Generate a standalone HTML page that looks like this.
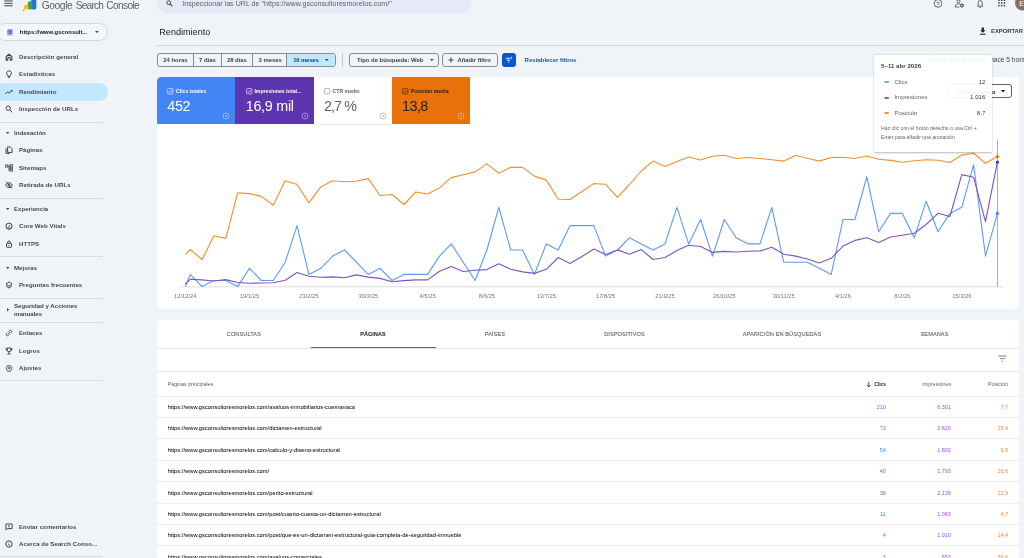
<!DOCTYPE html>
<html lang="es">
<head>
<meta charset="utf-8">
<title>Rendimiento - Google Search Console</title>
<style>
*{box-sizing:border-box;margin:0;padding:0}
html,body{width:1024px;height:558px;overflow:hidden;background:#f0f4f9;font-family:"Liberation Sans",sans-serif;color:#3c4043}
.abs{position:absolute}
#app{position:relative;width:1024px;height:558px;overflow:hidden;will-change:transform}
.t{position:absolute;white-space:nowrap;line-height:1}
/* top bar */
#brand{left:41.7px;top:1.2px;font-size:10.3px;color:#5f6368}
#search{left:157px;top:-8px;width:314px;height:22px;border-radius:11px;background:#e4ebf7}
#search .t{left:25.2px;top:9px;font-size:7.13px;color:#5f6368}
/* sidebar */
#prop{left:-4px;top:23.1px;width:111.6px;height:17.7px;border:1px solid #d5d9de;border-radius:9px;background:#f3f6fb}
#prop .t{left:22.8px;top:5.8px;font-size:5.9px;font-weight:bold;color:#202124}
.nav{position:absolute;left:0;width:107px;height:17px}
.nav .t{left:19px;top:5.5px;font-size:6.1px;color:#44474b;font-weight:bold;letter-spacing:.05px}
.nav.sel{background:#c2e7ff;border-radius:8.75px;left:-5px;width:112.7px;height:17.5px}
.nav.sel svg{left:10px}.nav.sel .t{left:24px}
.nav svg{position:absolute;left:5px;top:4.5px;width:8px;height:8px}
.grp{position:absolute;left:0;width:107px;height:17px}
.grp .t{left:14px;top:5.5px;font-size:6.1px;color:#44474b;font-weight:bold}
.grp i{position:absolute;left:6px;top:7.3px;border:1.75px solid transparent;border-top:2.2px solid #444;border-bottom:0}
.sdiv{position:absolute;left:0;width:103px;height:1px;background:#dadce0}
/* main */
#title{left:159.3px;top:28px;font-size:9.08px;color:#202124}
#hdiv{left:157px;top:45px;width:867px;height:1px;background:#d3d7dc}
.chip{position:absolute;top:52px;height:14px;border:1px solid #8a8d91;border-radius:3px;font-size:5.9px;font-weight:bold;color:#3c4043}
.chip .t{top:4.5px}
.card{position:absolute;background:#fff;border-radius:4.5px}
.met{position:absolute;top:0;width:78.2px;height:47.2px}
.met .l{left:19px;top:11.6px;font-size:5.15px;font-weight:bold}
.met .v{left:10.3px;top:22px;font-size:14.3px;letter-spacing:-0.3px}
.met .cbx{position:absolute;left:10.6px;top:11.2px;width:5.7px;height:5.7px;border:0.6px solid #fff;border-radius:.8px;opacity:.9}
.met .qx{position:absolute;right:5.6px;bottom:6px;width:6.4px;height:6.4px;border:0.55px solid rgba(255,255,255,.7);border-radius:50%;opacity:.8}
/* table */
.tab{position:absolute;top:332px;font-size:5.6px;color:#5f6368;letter-spacing:.1px;transform:translateX(-50%);white-space:nowrap;line-height:1;-webkit-text-stroke:0.1px #5f6368}
.row{position:absolute;left:157.3px;width:861.4px;height:21.45px;border-top:1px solid #eaecef;font-size:5.45px}
.row .t{top:8.4px}
.row .u{left:10.4px;color:#202124;font-size:5.79px;-webkit-text-stroke:0.05px #202124}
.row .c1{right:132.8px;color:#3b86e8}
.row .c2{right:67.9px;color:#a04fd8}
.row .c3{right:10.7px;color:#e08a40}
</style>
</head>
<body>
<div id="app">
<!--TOPBAR-->
<svg class="abs" style="left:0;top:0" width="40" height="14" viewBox="0 0 40 14">
<rect x="4.3" y="0.4" width="8.4" height="1.1" fill="#555"/><rect x="4.3" y="2.8" width="8.4" height="1.1" fill="#555"/><rect x="4.3" y="5.2" width="8.4" height="1.1" fill="#555"/>
<rect x="31.2" y="-3" width="5.1" height="12.6" rx="2" fill="#1a73e8"/>
<rect x="27.8" y="1.2" width="4.6" height="8.4" rx="1.8" fill="#34a853"/>
<path d="M25.6 8.2 L23 10.7" stroke="#fbbc04" stroke-width="1.3" stroke-linecap="round"/>
<circle cx="28.4" cy="7" r="1.3" fill="#ea4335"/>
<circle cx="26.4" cy="6.9" r="2.3" fill="#fbbc04"/>
</svg>
<div class="t" id="brand"><span style="letter-spacing:-0.43px">Google</span> <span class="abs" style="left:34.1px;top:0;font-size:10.1px;letter-spacing:-0.78px">Search</span> <span class="abs" style="left:64.6px;top:0;font-size:10.1px;letter-spacing:-0.6px">Console</span></div>
<div class="abs" id="search"><svg class="abs" style="left:9px;top:8px" width="7" height="7" viewBox="0 0 7 7"><circle cx="2.7" cy="2.7" r="1.9" fill="none" stroke="#3c4043" stroke-width="1"/><path d="M4.2 4.2L6.3 6.3" stroke="#3c4043" stroke-width="1.1"/></svg><div class="t">Inspeccionar las URL de "https://www.gsconsultoresmorelos.com/"</div></div>
<svg class="abs" style="left:930px;top:-4px" width="94" height="16" viewBox="0 0 94 16" fill="none" stroke="#444" stroke-width="0.8">
<circle cx="8" cy="7.4" r="3.9"/><text x="8" y="9.6" font-size="6" font-family="Liberation Sans, sans-serif" text-anchor="middle" fill="#444" stroke="none">?</text>
<circle cx="28.5" cy="5.3" r="1.5"/><path d="M25.3 11 v-0.9 c0-1.4 1.6-2.2 3.2-2.2 c0.6 0 1.1 0.1 1.5 0.25 M25.3 11 h4"/><circle cx="32" cy="9.5" r="1.4" stroke-width="1.1"/>
<path d="M47.4 10.2 h5.6 l-0.8-0.9 v-2.7 a2 2 0 0 0-4 0 v2.7z"/><path d="M49.5 11.3 h1.4" stroke-width="1"/><path d="M50.2 4.1v-0.7" />
<g fill="#444" stroke="none"><rect x="68.2" y="3.5" width="1.5" height="1.5"/><rect x="70.9" y="3.5" width="1.5" height="1.5"/><rect x="73.6" y="3.5" width="1.5" height="1.5"/><rect x="68.2" y="6.2" width="1.5" height="1.5"/><rect x="70.9" y="6.2" width="1.5" height="1.5"/><rect x="73.6" y="6.2" width="1.5" height="1.5"/><rect x="68.2" y="8.9" width="1.5" height="1.5"/><rect x="70.9" y="8.9" width="1.5" height="1.5"/><rect x="73.6" y="8.9" width="1.5" height="1.5"/></g>
<circle cx="92.5" cy="7" r="7.5" fill="#8d6e63" stroke="none"/><text x="89.3" y="10" font-size="7" font-family="Liberation Sans, sans-serif" fill="#fff" stroke="none">E</text>
</svg>
<!--SIDEBAR-->
<div class="abs" id="prop"><div class="abs" style="left:7.3px;top:3.5px;width:10px;height:9.4px;background:#fff;border-radius:1px"><svg class="abs" style="left:2.4px;top:1.2px" width="6" height="7" viewBox="0 0 6 7"><rect x="0.4" y="0.4" width="5.1" height="5" fill="#4a63ff"/><g fill="#fff" opacity=".55"><rect x="1.2" y="1.2" width="1.1" height="1.1"/><rect x="3.5" y="1.2" width="1.1" height="1.1"/><rect x="1.2" y="3.2" width="1.1" height="1.1"/><rect x="3.5" y="3.2" width="1.1" height="1.1"/></g><rect x="0" y="5.9" width="6" height="0.6" fill="#4a63ff" opacity=".8"/></svg></div><div class="t">https://www.gsconsult...</div><svg class="abs" style="left:96.75px;top:6.05px" width="5.90" height="4.10" viewBox="0 0 5.90 4.10"><path d="M1 1h3.90l-1.95 2.10z" fill="#444"/></svg></div>
<div class="nav" style="top:48.5px"><svg viewBox="0 0 8 8"><path d="M1.2 7.1V3.5L4 1.2l2.8 2.3v3.6H5.3V5.7a1.3 1.3 0 0 0-2.6 0v1.4z" fill="none" stroke="#444" stroke-width="1.12" stroke-linejoin="round"/></svg><div class="t">Descripción general</div></div>
<div class="nav" style="top:65.8px"><svg viewBox="0 0 8 8"><path d="M4 0.8a2.4 2.4 0 0 0-1.3 4.4v1h2.6v-1A2.4 2.4 0 0 0 4 0.8z" fill="none" stroke="#444" stroke-width="1"/><path d="M3.1 7.4h1.8" fill="none" stroke="#444" stroke-width="1"/></svg><div class="t">Estadísticas</div></div>
<div class="nav sel" style="top:83.3px"><svg viewBox="0 0 8 8"><path d="M0.5 6l2.1-2.2 1.5 1.4 2.3-2.4" fill="none" stroke="#444" stroke-width="1"/><path d="M5.2 1.9h2.3v2.3z" fill="#444"/></svg><div class="t">Rendimiento</div></div>
<div class="nav" style="top:100.7px"><svg viewBox="0 0 8 8"><circle cx="3.2" cy="3.2" r="2.2" fill="none" stroke="#444" stroke-width="1"/><path d="M4.9 4.9l2.4 2.4" fill="none" stroke="#444" stroke-width="1"/></svg><div class="t">Inspección de URLs</div></div>
<div class="sdiv" style="top:121.5px;width:103px"></div>
<div class="grp" style="top:124.3px"><svg class="abs" style="left:4.90px;top:6.85px" width="5.40" height="4.10" viewBox="0 0 5.40 4.10"><path d="M1 1h3.40l-1.70 2.10z" fill="#444"/></svg><div class="t">Indexación</div></div>
<div class="nav" style="top:141.9px"><svg viewBox="0 0 8 8"><path d="M2.6 0.9h2.6l1.9 1.9v3.6h-4.5z" fill="none" stroke="#444" stroke-width="1"/><path d="M1 2.4v5h3.6" fill="none" stroke="#444" stroke-width="1"/></svg><div class="t">Páginas</div></div>
<div class="nav" style="top:159.3px"><svg viewBox="0 0 8 8"><rect x="0.6" y="0.9" width="2.2" height="2.2" fill="none" stroke="#444" stroke-width="0.8"/><rect x="5" y="0.7" width="2.4" height="1.6" fill="none" stroke="#444" stroke-width="0.8"/><rect x="5" y="3.2" width="2.4" height="1.5" fill="none" stroke="#444" stroke-width="0.8"/><rect x="5" y="5.6" width="2.4" height="1.6" fill="none" stroke="#444" stroke-width="0.8"/><path d="M2.8 2h2.2M3.9 2v4.4h1.1M3.9 4h1.1" fill="none" stroke="#444" stroke-width="0.8"/></svg><div class="t">Sitemaps</div></div>
<div class="nav" style="top:176.7px"><svg viewBox="0 0 8 8"><path d="M0.6 4.2c0.9-1.6 2-2.4 3.4-2.4s2.5 0.8 3.4 2.4c-0.9 1.6-2 2.4-3.4 2.4S1.5 5.8 0.6 4.2z" fill="none" stroke="#444" stroke-width="1"/><circle cx="4" cy="4.2" r="1" fill="none" stroke="#444" stroke-width="1"/><path d="M1.2 0.8l5.8 6.6" fill="none" stroke="#444" stroke-width="1"/></svg><div class="t">Retirada de URLs</div></div>
<div class="sdiv" style="top:197.7px;width:103px"></div>
<div class="grp" style="top:200.6px"><svg class="abs" style="left:4.90px;top:6.85px" width="5.40" height="4.10" viewBox="0 0 5.40 4.10"><path d="M1 1h3.40l-1.70 2.10z" fill="#444"/></svg><div class="t">Experiencia</div></div>
<div class="nav" style="top:217.9px"><svg viewBox="0 0 8 8"><circle cx="4" cy="4.2" r="3.1" fill="none" stroke="#444" stroke-width="1"/><path d="M3.6 4.8l1.6-1.8" fill="none" stroke="#444" stroke-width="1"/><path d="M2.4 6h3.2" fill="none" stroke="#444" stroke-width="1"/></svg><div class="t">Core Web Vitals</div></div>
<div class="nav" style="top:235.3px"><svg viewBox="0 0 8 8"><rect x="1.5" y="3.4" width="5" height="3.9" rx="0.6" fill="none" stroke="#444" stroke-width="1"/><path d="M2.7 3.4V2.3a1.3 1.3 0 0 1 2.6 0v1.1" fill="none" stroke="#444" stroke-width="1"/><circle cx="4" cy="5.3" r="0.6" fill="#444"/></svg><div class="t">HTTPS</div></div>
<div class="sdiv" style="top:256.3px;width:103px"></div>
<div class="grp" style="top:259.6px"><svg class="abs" style="left:4.90px;top:6.85px" width="5.40" height="4.10" viewBox="0 0 5.40 4.10"><path d="M1 1h3.40l-1.70 2.10z" fill="#444"/></svg><div class="t">Mejoras</div></div>
<div class="nav" style="top:276.9px"><svg viewBox="0 0 8 8"><path d="M4 0.9l3 2.2-3 2.2-3-2.2z" fill="none" stroke="#444" stroke-width="1"/><path d="M1 4.9l3 2.2 3-2.2" fill="none" stroke="#444" stroke-width="1"/></svg><div class="t">Preguntas frecuentes</div></div>
<div class="sdiv" style="top:297.9px;width:103px"></div>
<div class="grp" style="top:301px;height:18px"><svg class="abs" style="left:5.75px;top:5.60px" width="4.10" height="5.40" viewBox="0 0 4.10 5.40"><path d="M1 1l2.10 1.70l-2.10 1.70z" fill="#444"/></svg><div class="t" style="top:1px;line-height:8.3px;white-space:normal;width:80px">Seguridad y Acciones manuales</div></div>
<div class="sdiv" style="top:321.5px;width:103px"></div>
<div class="nav" style="top:324.8px"><svg viewBox="0 0 8 8"><g transform="rotate(-45 4 4)" fill="none" stroke="#444" stroke-width="0.9"><path d="M3.2 2.7H2a1.3 1.3 0 0 0 0 2.6h1.2M4.8 2.7h1.2a1.3 1.3 0 0 1 0 2.6H4.8M2.8 4h2.4"/></g></svg><div class="t">Enlaces</div></div>
<div class="nav" style="top:342.1px"><svg viewBox="0 0 8 8"><path d="M2.2 1h3.6v2a1.8 1.8 0 0 1-3.6 0z" fill="none" stroke="#444" stroke-width="1"/><path d="M2.2 1.6H1v0.6a1.2 1.2 0 0 0 1.3 1.2M5.8 1.6H7v0.6a1.2 1.2 0 0 1-1.3 1.2M4 4.9v1.7M2.4 7h3.2" fill="none" stroke="#444" stroke-width="1"/></svg><div class="t">Logros</div></div>
<div class="nav" style="top:359.4px"><svg viewBox="0 0 8 8"><path d="M4 0.7l0.9 0.9 1.3-0.1 0.2 1.3 1 0.8-0.7 1.1 0.3 1.3-1.2 0.5-0.5 1.2-1.3-0.3-1.3 0.3-0.5-1.2-1.2-0.5 0.3-1.3-0.7-1.1 1-0.8 0.2-1.3 1.3 0.1z" transform="translate(0.4 0.5) scale(0.9)" fill="none" stroke="#444" stroke-width="0.9" stroke-linejoin="round"/><circle cx="4" cy="4.1" r="1" fill="none" stroke="#444" stroke-width="0.9"/></svg><div class="t">Ajustes</div></div>
<div class="sdiv" style="top:380.1px;width:103px"></div>
<div class="nav" style="top:518.3px"><svg viewBox="0 0 8 8"><path d="M0.9 1h6.2v4.6H2.3L0.9 7z" fill="none" stroke="#444" stroke-width="1"/><path d="M4 2v2.2" fill="none" stroke="#444" stroke-width="1"/><circle cx="4" cy="4.8" r="0.35" fill="#444"/></svg><div class="t">Enviar comentarios</div></div>
<div class="nav" style="top:535.8px"><svg viewBox="0 0 8 8"><circle cx="4" cy="4" r="3.2" fill="none" stroke="#444" stroke-width="1"/><path d="M4 3.7v2" fill="none" stroke="#444" stroke-width="1"/><circle cx="4" cy="2.5" r="0.45" fill="#444"/></svg><div class="t">Acerca de Search Conso...</div></div>
<div class="sdiv" style="top:555.5px;width:103px"></div>
<!--MAIN-->
<div class="t" id="title">Rendimiento</div>
<svg class="abs" style="left:979px;top:27px" width="8" height="9" viewBox="0 0 8 9"><path d="M2.7 0.6h2.2v2.6h1.6L3.8 5.8 1.1 3.2h1.6z" fill="#202124"/><rect x="0.9" y="6.7" width="5.8" height="1" fill="#202124"/></svg>
<div class="t" style="left:991px;top:28.6px;font-size:5.85px;font-weight:bold;color:#3c4043;letter-spacing:.0px">EXPORTAR</div>
<div class="abs" id="hdiv"></div>
<div class="chip" style="left:157px;width:179px;top:52.8px;height:14px;overflow:hidden"><div class="abs" style="left:128.9px;top:-1px;width:50px;height:14px;background:#c2e7ff"></div><div class="abs" style="left:34.5px;top:-1px;width:1px;height:14px;background:#8a8d91"></div><div class="abs" style="left:62.7px;top:-1px;width:1px;height:14px;background:#8a8d91"></div><div class="abs" style="left:93.5px;top:-1px;width:1px;height:14px;background:#8a8d91"></div><div class="abs" style="left:128.4px;top:-1px;width:1px;height:14px;background:#8a8d91"></div><div class="t" style="left:5.3px">24 horas</div><div class="t" style="left:41.1px">7 días</div><div class="t" style="left:68.9px">28 días</div><div class="t" style="left:100.5px">3 meses</div><div class="t" style="left:135.2px;color:#004a77;letter-spacing:-0.15px">16 meses</div><svg class="abs" style="left:165.75px;top:4.10px" width="5.70" height="4.00" viewBox="0 0 5.70 4.00"><path d="M1 1h3.70l-1.85 2.00z" fill="#004a77"/></svg></div>
<div class="abs" style="left:342.4px;top:52.8px;width:1px;height:14px;background:#c4c7c5"></div>
<div class="chip" style="left:349.3px;width:89.3px;top:52.8px;height:14px"><div class="t" style="left:6.8px">Tipo de búsqueda: Web</div><svg class="abs" style="left:78.45px;top:4.10px" width="5.70" height="4.00" viewBox="0 0 5.70 4.00"><path d="M1 1h3.70l-1.85 2.00z" fill="#444"/></svg></div>
<div class="chip" style="left:442px;width:56px;top:52.8px;height:14px"><svg class="abs" style="left:4.5px;top:3px" width="6" height="6" viewBox="0 0 6 6"><path d="M3 0.5v5M0.5 3h5" stroke="#3c4043" stroke-width="1"/></svg><div class="t" style="left:14.4px">Añadir filtro</div></div>
<div class="abs" style="left:501.9px;top:52.8px;width:14.1px;height:14px;border-radius:3px;background:#0b57d0"><svg class="abs" style="left:3px;top:3.2px" width="8" height="8" viewBox="0 0 8 8"><path d="M0.8 2.3h4M1.8 4.1h3.4M2.9 5.9h1.4" stroke="#fff" stroke-width="0.9"/><path d="M6.2 0.4l0.4 1 1 0.4-1 0.4-0.4 1-0.4-1-1-0.4 1-0.4z" fill="#fff"/></svg></div>
<div class="t" style="left:524.6px;top:58px;font-size:5.95px;font-weight:bold;color:#0b57d0">Restablecer filtros</div>
<div class="t" style="left:927.7px;top:56.5px;font-size:6.62px;color:#444">Última actualización: hace 5 horas</div>
<div class="card" style="left:157px;top:77.3px;width:861.7px;height:231.8px;overflow:hidden">
<div class="met" style="left:0px;width:78.5px;background:#4285f4;color:#fff"><svg class="abs" style="left:10.3px;top:10.9px" width="7" height="7" viewBox="0 0 7 7"><rect x="0.6" y="0.6" width="5.3" height="5.3" rx="0.7" fill="none" stroke="#fff" stroke-width="0.65" opacity=".92"/><path d="M1.8 3.4l1 1 2-2.3" fill="none" stroke="#fff" stroke-width="0.75"/></svg><div class="t l">Clics totales</div><div class="t v" style="letter-spacing:-0.3px">452</div><svg class="abs" style="left:65.2px;top:34.8px" width="8" height="8" viewBox="0 0 8 8" opacity=".72"><circle cx="4" cy="4" r="3" fill="none" stroke="#fff" stroke-width="0.55"/><text x="4" y="5.6" font-size="4.4" font-family="Liberation Sans, sans-serif" text-anchor="middle" fill="#fff">?</text></svg></div>
<div class="met" style="left:78.4px;background:#5e35b1;color:#fff"><svg class="abs" style="left:10.3px;top:10.9px" width="7" height="7" viewBox="0 0 7 7"><rect x="0.6" y="0.6" width="5.3" height="5.3" rx="0.7" fill="none" stroke="#fff" stroke-width="0.65" opacity=".92"/><path d="M1.8 3.4l1 1 2-2.3" fill="none" stroke="#fff" stroke-width="0.75"/></svg><div class="t l">Impresiones total...</div><div class="t v" style="letter-spacing:-0.25px">16,9 mil</div><svg class="abs" style="left:65.2px;top:34.8px" width="8" height="8" viewBox="0 0 8 8" opacity=".72"><circle cx="4" cy="4" r="3" fill="none" stroke="#fff" stroke-width="0.55"/><text x="4" y="5.6" font-size="4.4" font-family="Liberation Sans, sans-serif" text-anchor="middle" fill="#fff">?</text></svg></div>
<div class="met" style="left:156.6px;background:#fff;color:#5f6368"><svg class="abs" style="left:10.3px;top:10.9px" width="7" height="7" viewBox="0 0 7 7"><rect x="0.6" y="0.6" width="5.3" height="5.3" rx="0.7" fill="none" stroke="#80868b" stroke-width="0.65" opacity=".92"/></svg><div class="t l">CTR medio</div><div class="t v" style="letter-spacing:-0.9px">2,7 %</div><svg class="abs" style="left:65.2px;top:34.8px" width="8" height="8" viewBox="0 0 8 8" opacity=".72"><circle cx="4" cy="4" r="3" fill="none" stroke="#5f6368" stroke-width="0.55"/><text x="4" y="5.6" font-size="4.4" font-family="Liberation Sans, sans-serif" text-anchor="middle" fill="#5f6368">?</text></svg></div>
<div class="met" style="left:234.8px;background:#e8710a;color:#202124"><svg class="abs" style="left:10.3px;top:10.9px" width="7" height="7" viewBox="0 0 7 7"><rect x="0.6" y="0.6" width="5.3" height="5.3" rx="0.7" fill="none" stroke="#202124" stroke-width="0.65" opacity=".92"/><path d="M1.8 3.4l1 1 2-2.3" fill="none" stroke="#202124" stroke-width="0.75"/></svg><div class="t l">Posición media</div><div class="t v" style="letter-spacing:-0.55px">13,8</div><svg class="abs" style="left:65.2px;top:34.8px" width="8" height="8" viewBox="0 0 8 8" opacity=".72"><circle cx="4" cy="4" r="3" fill="none" stroke="#fff" stroke-width="0.55"/><text x="4" y="5.6" font-size="4.4" font-family="Liberation Sans, sans-serif" text-anchor="middle" fill="#fff">?</text></svg></div>
</div>
<div class="abs" style="left:313.6px;top:124.3px;width:78.2px;height:1px;background:#e8eaed"></div>
<div class="chip" style="left:948px;width:63.5px;top:84.4px;height:13.4px;border-color:#5f6368"><div class="t" style="left:7.2px;top:3.4px;font-size:6.1px">Cada semana</div><svg class="abs" style="left:51.10px;top:3.60px" width="6.20" height="4.40" viewBox="0 0 6.20 4.40"><path d="M1 1h4.20l-2.10 2.40z" fill="#202124"/></svg></div>
<!--CHART-->
<svg class="abs" style="left:0;top:0" width="1024" height="320" viewBox="0 0 1024 320">
<rect x="180.3" y="286.3" width="822.7" height="1" fill="#dcdcdc"/>
<polyline points="185.3,254.6 190.2,249.5 202.1,259.5 213.9,235.8 225.8,238.4 237.7,192.7 249.5,193.6 261.4,196.4 273.3,205.2 285.2,180.7 297.0,184.5 308.9,202.9 320.8,186.9 332.6,180.8 344.5,181.8 356.4,181.3 368.2,178.6 380.1,195.5 392.0,194.5 403.9,204.5 415.7,192.0 427.6,194.0 439.5,187.9 451.3,177.6 463.2,174.7 475.1,171.9 486.9,163.9 498.8,173.2 510.7,167.4 522.6,167.4 534.4,176.1 546.3,180.1 558.2,199.3 570.0,199.5 581.9,191.5 593.8,183.6 605.6,184.3 617.5,197.4 629.4,184.5 641.3,171.0 653.1,161.1 665.0,166.6 676.9,161.4 688.7,157.0 700.6,160.0 712.5,156.3 724.3,155.3 736.2,158.5 748.1,157.5 760.0,158.5 771.8,159.7 783.7,161.1 795.6,155.5 807.4,158.2 819.3,161.1 831.2,157.5 843.0,157.3 854.9,158.5 866.8,156.0 878.7,159.2 890.5,160.4 902.4,162.2 914.3,160.7 926.1,159.7 938.0,160.2 949.9,162.5 961.8,155.1 973.6,153.3 985.5,163.2 997.4,156.6" fill="none" stroke="#f0902f" stroke-width="1.12" stroke-linejoin="round"/>
<polyline points="185.3,286.6 190.2,274.4 202.1,286.6 213.9,280.5 225.8,280.5 237.7,286.6 249.5,268.3 261.4,280.5 273.3,280.5 285.2,262.2 297.0,225.6 308.9,274.4 320.8,268.3 332.6,256.1 344.5,250.0 356.4,262.2 368.2,274.4 380.1,268.3 392.0,280.5 403.9,274.4 415.7,274.4 427.6,274.4 439.5,256.1 451.3,243.9 463.2,262.2 475.1,280.5 486.9,250.0 498.8,207.3 510.7,250.0 522.6,250.0 534.4,274.4 546.3,243.9 558.2,250.0 570.0,225.6 581.9,225.6 593.8,225.6 605.6,256.1 617.5,250.0 629.4,237.8 641.3,243.9 653.1,250.0 665.0,243.9 676.9,207.3 688.7,243.9 700.6,219.5 712.5,256.1 724.3,219.5 736.2,237.8 748.1,243.9 760.0,243.9 771.8,207.3 783.7,262.2 795.6,262.2 807.4,262.2 819.3,268.3 831.2,274.4 843.0,219.5 854.9,219.5 866.8,176.8 878.7,231.7 890.5,213.4 902.4,213.4 914.3,237.8 926.1,201.2 938.0,231.7 949.9,213.4 961.8,207.3 973.6,164.6 985.5,256.1 997.4,213.4" fill="none" stroke="#5b9cf6" stroke-width="1.12" stroke-linejoin="round"/>
<polyline points="185.3,284.0 190.2,279.3 202.1,279.9 213.9,281.0 225.8,279.6 237.7,282.5 249.5,283.2 261.4,283.0 273.3,282.7 285.2,280.3 297.0,272.5 308.9,276.3 320.8,277.3 332.6,276.9 344.5,277.8 356.4,274.9 368.2,277.1 380.1,278.4 392.0,281.8 403.9,280.6 415.7,279.9 427.6,279.9 439.5,271.2 451.3,266.4 463.2,271.5 475.1,270.3 486.9,269.6 498.8,263.7 510.7,269.3 522.6,271.9 534.4,273.4 546.3,269.3 558.2,257.5 570.0,263.4 581.9,256.5 593.8,249.0 605.6,254.6 617.5,249.9 629.4,254.3 641.3,249.6 653.1,259.5 665.0,257.5 676.9,250.5 688.7,245.3 700.6,246.5 712.5,252.4 724.3,251.4 736.2,252.0 748.1,251.2 760.0,250.9 771.8,247.3 783.7,254.2 795.6,256.1 807.4,259.0 819.3,263.0 831.2,258.3 843.0,246.1 854.9,240.4 866.8,237.7 878.7,242.4 890.5,237.0 902.4,235.2 914.3,233.3 926.1,224.5 938.0,213.3 949.9,216.5 961.8,174.6 973.6,177.3 985.5,221.7 997.4,162.2" fill="none" stroke="#7d55c0" stroke-width="1.12" stroke-linejoin="round"/>
<rect x="997.1" y="139.4" width="0.65" height="147.6" fill="#808080"/>
<circle cx="997.4" cy="156.6" r="1.6" fill="#e8710a"/><circle cx="997.4" cy="162.2" r="1.6" fill="#5e35b1"/><circle cx="997.4" cy="213.4" r="1.6" fill="#4285f4"/>
<g font-family="Liberation Sans, sans-serif" font-size="5.8" fill="#757575" text-anchor="middle"><text x="185.3" y="297.8">12/12/24</text><text x="249.5" y="297.8">19/1/25</text><text x="308.9" y="297.8">23/2/25</text><text x="368.2" y="297.8">30/3/25</text><text x="427.6" y="297.8">4/5/25</text><text x="486.9" y="297.8">8/6/25</text><text x="546.3" y="297.8">13/7/25</text><text x="605.6" y="297.8">17/8/25</text><text x="665.0" y="297.8">21/9/25</text><text x="724.3" y="297.8">26/10/25</text><text x="783.7" y="297.8">30/11/25</text><text x="843.0" y="297.8">4/1/26</text><text x="902.4" y="297.8">8/2/26</text><text x="961.8" y="297.8">15/3/26</text></g>
</svg>
<!--TABLE-->
<div class="card" style="left:157px;top:320.1px;width:861.7px;height:260px"></div>
<div class="tab" style="left:243.9px">CONSULTAS</div><div class="tab" style="left:373.0px;font-weight:bold;color:#202124;font-size:5.45px">PÁGINAS</div><div class="tab" style="left:495.0px">PAÍSES</div><div class="tab" style="left:624.5px">DISPOSITIVOS</div><div class="tab" style="left:782.0px">APARICIÓN EN BÚSQUEDAS</div><div class="tab" style="left:934.5px">SEMANAS</div>
<div class="abs" style="left:157.3px;top:347.8px;width:861.4px;height:1px;background:#e3e5e8"></div>
<div class="abs" style="left:311.3px;top:346.6px;width:124.5px;height:1.2px;background:#5f6368"></div>
<svg class="abs" style="left:998px;top:354.5px" width="9" height="7" viewBox="0 0 9 7"><path d="M0.3 1h8.2M1.8 3.6h5.2M3.7 6.2h1.5" stroke="#5f6368" stroke-width="0.8"/></svg>
<div class="abs" style="left:157.3px;top:370.7px;width:861.4px;height:1px;background:#e6e8eb"></div>
<div class="t" style="left:167.7px;top:382.3px;font-size:5.27px;color:#5f6368">Páginas principales</div>
<svg class="abs" style="left:865.5px;top:380.5px" width="6" height="7" viewBox="0 0 6 7"><path d="M2.8 0.8v5M0.8 3.9l2 2 2-2" fill="none" stroke="#202124" stroke-width="0.8"/></svg>
<div class="t" style="right:138.1px;top:382.2px;font-size:5.05px;font-weight:bold;letter-spacing:-0.1px;color:#202124">Clics</div>
<div class="t" style="right:72.9px;top:382.3px;font-size:5.3px;color:#5f6368">Impresiones</div>
<div class="t" style="right:16px;top:382.3px;font-size:5.3px;color:#5f6368">Posición</div>
<div class="row" style="top:395.60px"><div class="t u">https://www.gsconsultoresmorelos.com/avaluos-inmobiliarios-cuernavaca</div><div class="t c1">210</div><div class="t c2">6.301</div><div class="t c3">7,7</div></div>
<div class="row" style="top:417.01px"><div class="t u">https://www.gsconsultoresmorelos.com/dictamen-estructural</div><div class="t c1">73</div><div class="t c2">2.620</div><div class="t c3">15,4</div></div>
<div class="row" style="top:438.42px"><div class="t u">https://www.gsconsultoresmorelos.com/calculo-y-diseno-estructural</div><div class="t c1">54</div><div class="t c2">1.802</div><div class="t c3">9,9</div></div>
<div class="row" style="top:459.83px"><div class="t u">https://www.gsconsultoresmorelos.com/</div><div class="t c1">40</div><div class="t c2">1.793</div><div class="t c3">16,6</div></div>
<div class="row" style="top:481.24px"><div class="t u">https://www.gsconsultoresmorelos.com/perito-estructural</div><div class="t c1">38</div><div class="t c2">2.139</div><div class="t c3">22,9</div></div>
<div class="row" style="top:502.65px"><div class="t u">https://www.gsconsultoresmorelos.com/post/cuanto-cuesta-un-dictamen-estructural</div><div class="t c1">11</div><div class="t c2">1.083</div><div class="t c3">4,7</div></div>
<div class="row" style="top:524.06px"><div class="t u">https://www.gsconsultoresmorelos.com/post/que-es-un-dictamen-estructural-guia-completa-de-seguridad-inmueble</div><div class="t c1">4</div><div class="t c2">1.010</div><div class="t c3">14,4</div></div>
<div class="row" style="top:545.47px"><div class="t u">https://www.gsconsultoresmorelos.com/avaluos-comerciales</div><div class="t c1">3</div><div class="t c2">653</div><div class="t c3">39,6</div></div>
<!--TOOLTIP-->
<div class="abs" style="left:874px;top:54.6px;width:118.2px;height:97.2px;background:rgba(255,255,255,.93);border-radius:1.5px;box-shadow:0 0.5px 2px rgba(0,0,0,.28),0 0 0.5px rgba(0,0,0,.2)"><div class="t" style="left:7.1px;top:8.6px;font-size:6.15px;font-weight:bold;color:#3c4043">5–11 abr 2026</div><svg class="abs" style="left:9px;top:25.45px" width="8" height="4" viewBox="0 0 8 4"><rect x="1.3" y="1.2" width="4.7" height="1.6" rx="0.8" fill="#4285f4"/></svg><div class="t" style="left:20.4px;top:24.3px;font-size:6.1px;color:#5f6368">Clics</div><div class="t" style="right:6.9px;top:24.3px;font-size:6.1px;color:#3c4043">12</div><svg class="abs" style="left:9px;top:40.95px" width="8" height="4" viewBox="0 0 8 4"><rect x="1.3" y="1.2" width="4.7" height="1.6" rx="0.8" fill="#5e35b1"/></svg><div class="t" style="left:20.4px;top:39.8px;font-size:6.1px;color:#5f6368">Impresiones</div><div class="t" style="right:6.9px;top:39.8px;font-size:6.1px;color:#3c4043">1.016</div><svg class="abs" style="left:9px;top:56.45px" width="8" height="4" viewBox="0 0 8 4"><rect x="1.3" y="1.2" width="4.7" height="1.6" rx="0.8" fill="#e8710a"/></svg><div class="t" style="left:20.4px;top:55.3px;font-size:6.1px;color:#5f6368">Posición</div><div class="t" style="right:6.9px;top:55.3px;font-size:6.1px;color:#3c4043">8,7</div><div class="t" style="left:7.1px;top:71.4px;font-size:5.16px;color:#5f6368">Haz clic con el botón derecho o usa Ctrl +</div><div class="t" style="left:7.1px;top:80.2px;font-size:5.16px;color:#5f6368">Enter para añadir una anotación</div></div>
</div>
</body>
</html>
